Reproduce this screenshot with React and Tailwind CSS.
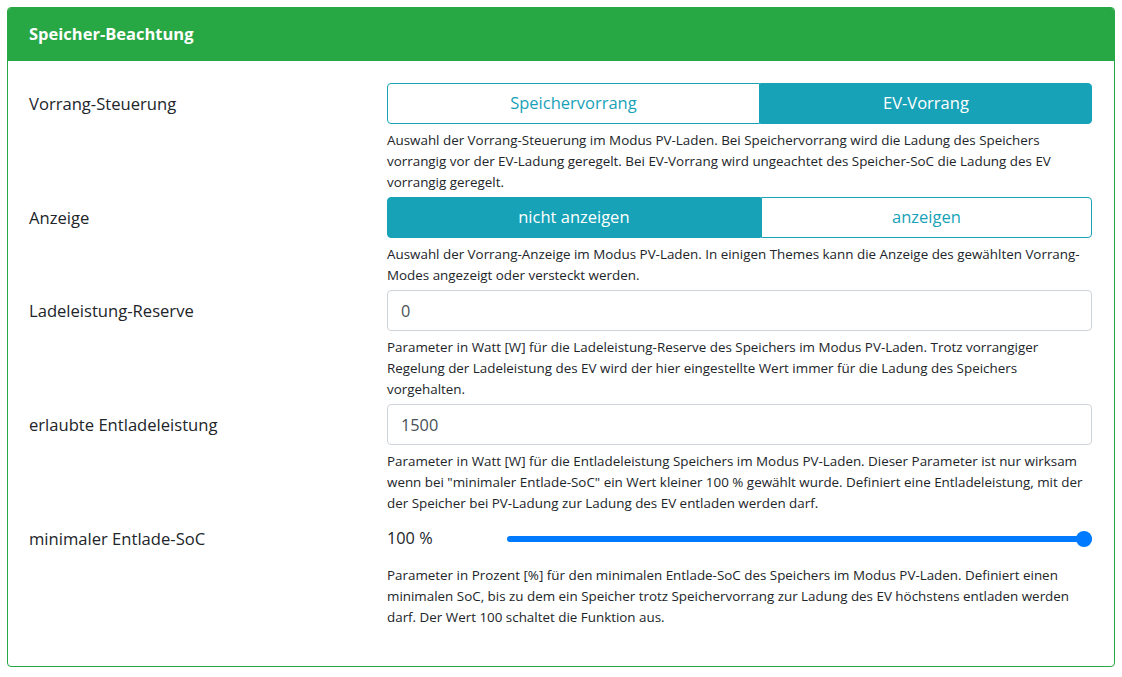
import React from "react";

const font = { fontFamily: '"Segoe UI", "Open Sans", "Noto Sans", sans-serif' };

function Toggle({ options, active }) {
  return (
    <div className="flex h-[41px]">
      {options.map((o, i) => (
        <button
          key={o}
          className={`flex-auto border border-[#17a2b8] text-[16.5px] ${
            i === 0 ? "rounded-l-[4px]" : "rounded-r-[4px]"
          } ${
            i === active
              ? "bg-[#17a2b8] text-white"
              : "bg-white text-[#17a2b8]"
          }`}
        >
          {o}
        </button>
      ))}
    </div>
  );
}

function Field({ label, help, children }) {
  return (
    <div className="grid grid-cols-[358px_1fr] mb-[4px]">
      <div className="h-[41px] pt-[2px] flex items-center text-[16.6px]">{label}</div>
      <div>
        {children}
        <p className="mt-[6px] text-[13.4px] leading-[21px]">{help}</p>
      </div>
    </div>
  );
}

function Input({ value }) {
  return (
    <input
      type="text"
      defaultValue={value}
      className="w-full h-[41px] px-[13px] border border-[#ced4da] rounded-[4px] text-[16.3px] text-[#495057] outline-none"
    />
  );
}

export default function App() {
  return (
    <div className="min-h-screen bg-white p-[7px] text-[#212529]" style={font}>
      <div className="border border-[#28a745] rounded-[4px] overflow-hidden">
        {/* Header */}
        <div className="bg-[#28a745] text-white font-bold text-[16.5px] h-[53px] flex items-center px-[21px]">
          Speicher-Beachtung
        </div>

        {/* Body */}
        <div className="pt-[22px] pb-[34px] pl-[21px] pr-[22px]">
          <Field
            label="Vorrang-Steuerung"
            help="Auswahl der Vorrang-Steuerung im Modus PV-Laden. Bei Speichervorrang wird die Ladung des Speichers vorrangig vor der EV-Ladung geregelt. Bei EV-Vorrang wird ungeachtet des Speicher-SoC die Ladung des EV vorrangig geregelt."
          >
            <Toggle options={["Speichervorrang", "EV-Vorrang"]} active={1} />
          </Field>

          <Field
            label="Anzeige"
            help="Auswahl der Vorrang-Anzeige im Modus PV-Laden. In einigen Themes kann die Anzeige des gewählten Vorrang-Modes angezeigt oder versteckt werden."
          >
            <Toggle options={["nicht anzeigen", "anzeigen"]} active={0} />
          </Field>

          <Field
            label="Ladeleistung-Reserve"
            help="Parameter in Watt [W] für die Ladeleistung-Reserve des Speichers im Modus PV-Laden. Trotz vorrangiger Regelung der Ladeleistung des EV wird der hier eingestellte Wert immer für die Ladung des Speichers vorgehalten."
          >
            <Input value="0" />
          </Field>

          <Field
            label="erlaubte Entladeleistung"
            help='Parameter in Watt [W] für die Entladeleistung Speichers im Modus PV-Laden. Dieser Parameter ist nur wirksam wenn bei "minimaler Entlade-SoC" ein Wert kleiner 100 % gewählt wurde. Definiert eine Entladeleistung, mit der der Speicher bei PV-Ladung zur Ladung des EV entladen werden darf.'
          >
            <Input value="1500" />
          </Field>

          <Field
            label="minimaler Entlade-SoC"
            help="Parameter in Prozent [%] für den minimalen Entlade-SoC des Speichers im Modus PV-Laden. Definiert einen minimalen SoC, bis zu dem ein Speicher trotz Speichervorrang zur Ladung des EV höchstens entladen werden darf. Der Wert 100 schaltet die Funktion aus."
          >
            <div className="h-[41px] flex items-center">
              <span className="w-[120px] text-[16.3px]">100 %</span>
              <div className="relative flex-1 h-4 flex items-center">
                <div className="w-full h-[6px] rounded-full bg-[#007bff]" />
                <div className="absolute right-0 w-4 h-4 rounded-full bg-[#007bff]" />
              </div>
            </div>
          </Field>
        </div>
      </div>
    </div>
  );
}
